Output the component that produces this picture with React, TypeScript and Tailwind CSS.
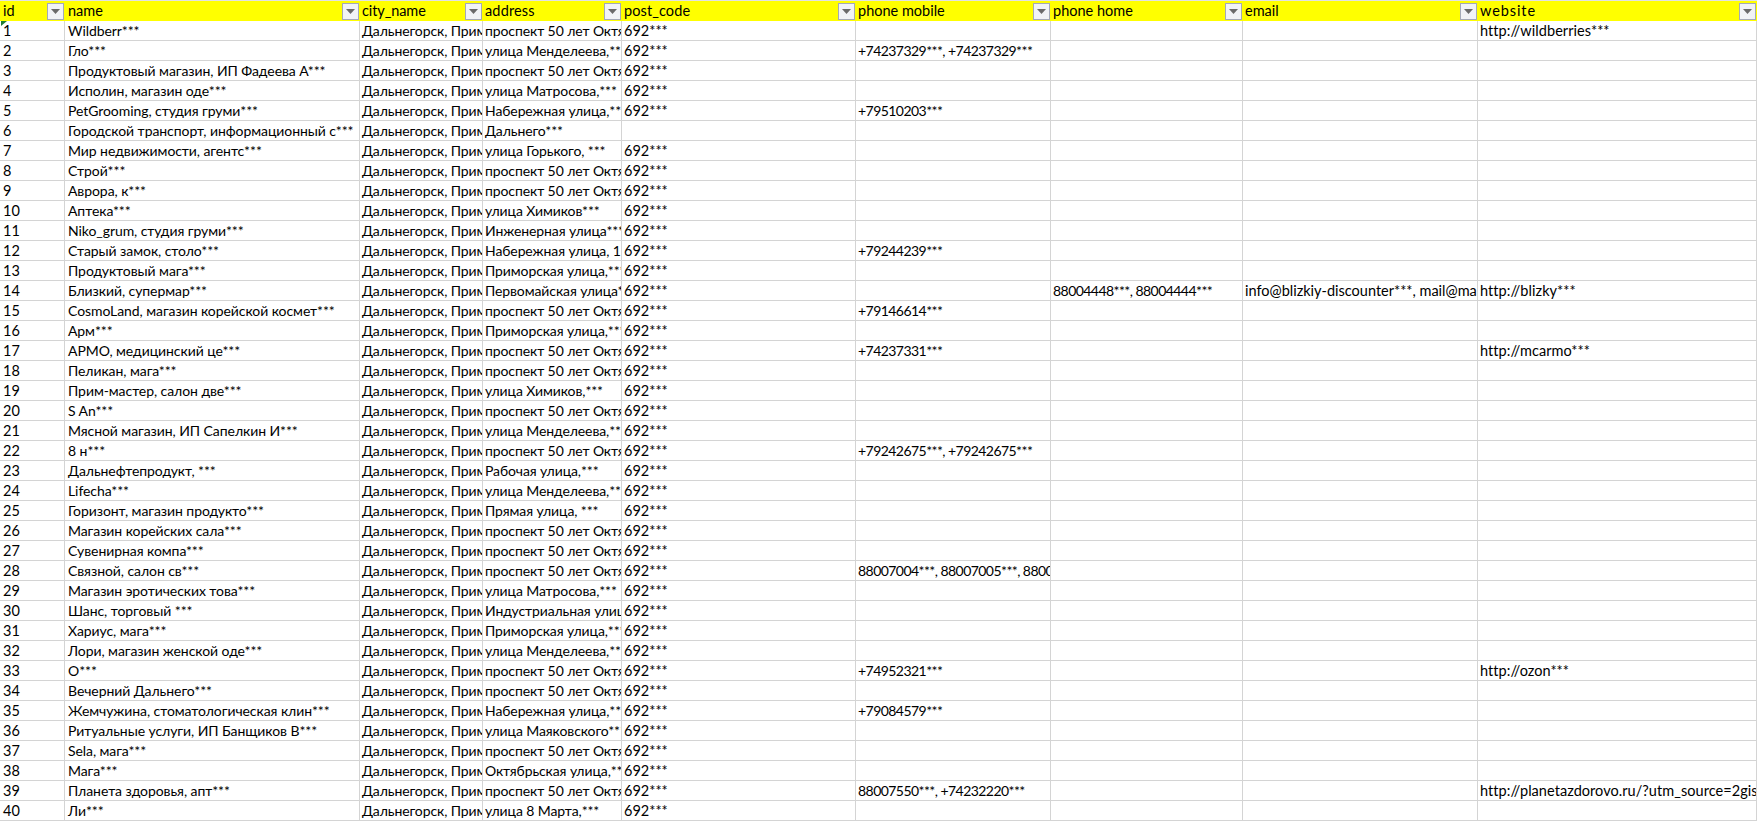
const columns = [
  { key: 'id', width: 'w-[65px]', pad: 'pl-[3px]', cell: '', head: '' },
  { key: 'name', width: 'w-[295px]', pad: 'pl-[3px]', cell: 'text-[14px] tracking-[-0.07px]', head: '' },
  { key: 'city_name', width: 'w-[123px]', pad: 'pl-[2px]', cell: 'text-[14px] tracking-[-0.1px]', head: 'tracking-[-0.1px]' },
  { key: 'address', width: 'w-[139px]', pad: 'pl-[2px]', cell: 'text-[14px] tracking-[-0.1px]', head: 'tracking-[0.15px]' },
  { key: 'post_code', width: 'w-[234px]', pad: 'pl-[2px]', cell: '', head: 'tracking-[0.1px]' },
  { key: 'phone mobile', width: 'w-[195px]', pad: 'pl-[2px]', cell: 'text-[14px] tracking-[-0.55px]', head: '' },
  { key: 'phone home', width: 'w-[192px]', pad: 'pl-[2px]', cell: 'text-[14px] tracking-[-0.55px]', head: '' },
  { key: 'email', width: 'w-[235px]', pad: 'pl-[2px]', cell: '', head: '' },
  { key: 'website', width: 'w-[279px]', pad: 'pl-[2px]', cell: 'tracking-[0.05px]', head: 'tracking-[0.9px]' },
];

const CITY = 'Дальнегорск, Приморский край***';
const PROSPECT = 'проспект 50 лет Октября***';
const POST = '692***';

type Row = [string, string, string?, string?, string?, string?, string?];

// name, address, post, mobile, home, email, website
const rows: Row[] = [
  ['Wildberr***', PROSPECT, POST, '', '', '', 'http://wildberries***'],
  ['Гло***', 'улица Менделеева,***', POST, '+74237329***, +74237329***'],
  ['Продуктовый магазин, ИП Фадеева А***', PROSPECT, POST],
  ['Исполин, магазин оде***', 'улица Матросова,***', POST],
  ['PetGrooming, студия груми***', 'Набережная улица,***', POST, '+79510203***'],
  ['Городской транспорт, информационный с***', 'Дальнего***', ''],
  ['Мир недвижимости, агентс***', 'улица Горького, ***', POST],
  ['Строй***', PROSPECT, POST],
  ['Аврора, к***', PROSPECT, POST],
  ['Аптека***', 'улица Химиков***', POST],
  ['Niko_grum, студия груми***', 'Инженерная улица***', POST],
  ['Старый замок, столо***', 'Набережная улица, 1***', POST, '+79244239***'],
  ['Продуктовый мага***', 'Приморская улица,***', POST],
  ['Близкий, супермар***', 'Первомайская улица***', POST, '', '88004448***, 88004444***', 'info@blizkiy-discounter***, mail@mail***', 'http://blizky***'],
  ['CosmoLand, магазин корейской космет***', PROSPECT, POST, '+79146614***'],
  ['Арм***', 'Приморская улица,***', POST],
  ['АРМО, медицинский це***', PROSPECT, POST, '+74237331***', '', '', 'http://mcarmo***'],
  ['Пеликан, мага***', PROSPECT, POST],
  ['Прим-мастер, салон две***', 'улица Химиков,***', POST],
  ['S An***', PROSPECT, POST],
  ['Мясной магазин, ИП Сапелкин И***', 'улица Менделеева,***', POST],
  ['8 н***', PROSPECT, POST, '+79242675***, +79242675***'],
  ['Дальнефтепродукт, ***', 'Рабочая улица,***', POST],
  ['Lifecha***', 'улица Менделеева,***', POST],
  ['Горизонт, магазин продукто***', 'Прямая улица, ***', POST],
  ['Магазин корейских сала***', PROSPECT, POST],
  ['Сувенирная компа***', PROSPECT, POST],
  ['Связной, салон св***', PROSPECT, POST, '88007004***, 88007005***, 88007006***'],
  ['Магазин эротических това***', 'улица Матросова,***', POST],
  ['Шанс, торговый ***', 'Индустриальная улица***', POST],
  ['Хариус, мага***', 'Приморская улица,***', POST],
  ['Лори, магазин женской оде***', 'улица Менделеева,***', POST],
  ['О***', PROSPECT, POST, '+74952321***', '', '', 'http://ozon***'],
  ['Вечерний Дальнего***', PROSPECT, POST],
  ['Жемчужина, стоматологическая клин***', 'Набережная улица,***', POST, '+79084579***'],
  ['Ритуальные услуги, ИП Банщиков В***', 'улица Маяковского***', POST],
  ['Sela, мага***', PROSPECT, POST],
  ['Мага***', 'Октябрьская улица,***', POST],
  ['Планета здоровья, апт***', PROSPECT, POST, '88007550***, +74232220***', '', '', 'http://planetazdorovo.ru/?utm_source=2gis&***'],
  ['Ли***', 'улица 8 Марта,***', POST],
];

const FilterButton: React.FC = () => (
  <div className="flex h-[17px] w-[17px] shrink-0 items-center justify-center border border-[#a3a9b8] bg-[#f1f3f6]">
    <svg width="9" height="5" viewBox="0 0 9 5">
      <polygon points="0,0 9,0 4.5,5" fill="#6a6a6a" />
    </svg>
  </div>
);

const App: React.FC = () => {
  return (
    <div className="relative h-[821px] w-[1757px] overflow-hidden bg-white font-['Lato','Open_Sans',sans-serif] text-[14.5px] text-black">
      <div className="h-px bg-[#e2e2e2]" />
      <div className="flex h-5 bg-[#ffff00]">
        {columns.map((col) => (
          <div key={col.key} className={`${col.width} ${col.pad} flex shrink-0 items-center justify-between pr-px`}>
            <span className={`whitespace-nowrap ${col.head}`}>{col.key}</span>
            <FilterButton />
          </div>
        ))}
      </div>
      {rows.map((row, index) => {
        const cells = [String(index + 1), row[0], CITY, row[1], row[2], row[3], row[4], row[5], row[6]];
        return (
          <div key={index} className="flex h-5 border-b border-[#d4d4d4]">
            {columns.map((col, i) => (
              <div
                key={col.key}
                className={`${col.width} ${col.pad} ${col.cell} shrink-0 overflow-hidden whitespace-nowrap border-r border-[#d4d4d4] leading-[19px]`}
              >
                {cells[i]}
              </div>
            ))}
          </div>
        );
      })}
      <svg className="absolute left-px top-[21px]" width="6" height="5" viewBox="0 0 6 5">
        <polygon points="0,0 6,0 0,5" fill="#1e7b34" />
      </svg>
    </div>
  );
};

export default App;
